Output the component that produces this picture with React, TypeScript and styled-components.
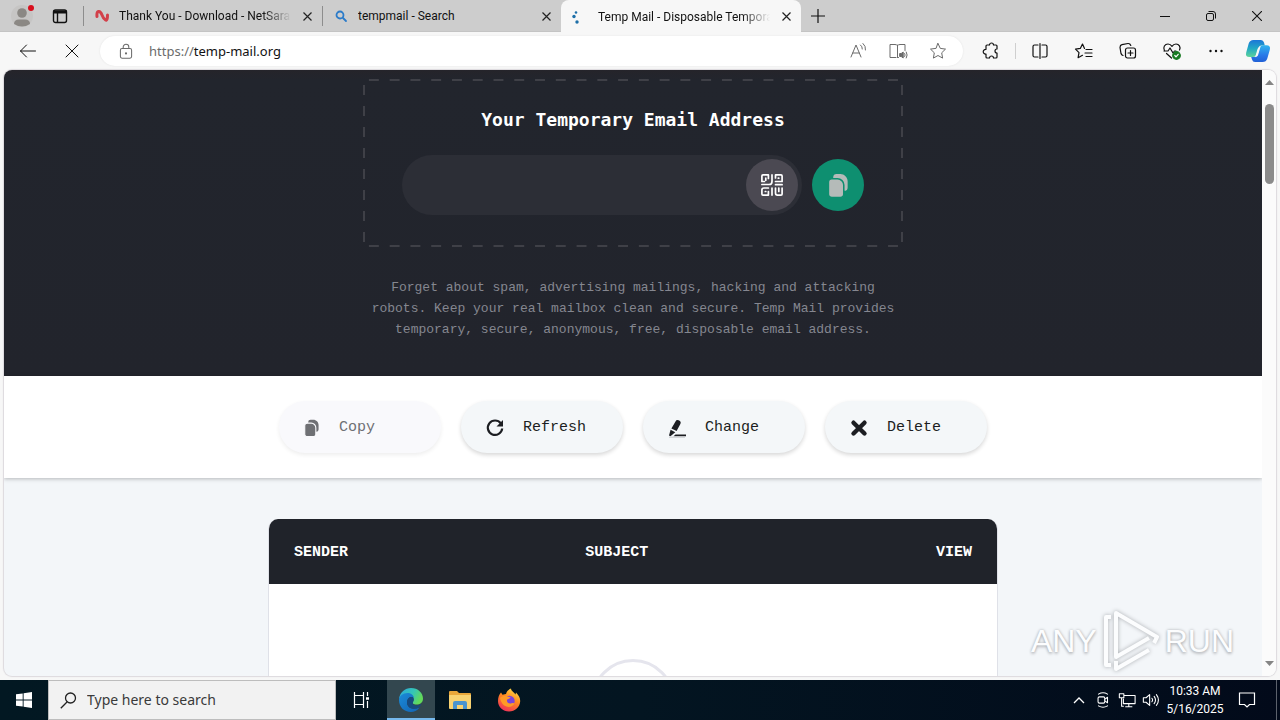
import React from "react";
import styled, { createGlobalStyle } from "styled-components";

const ui = `"Noto Sans", "Open Sans", sans-serif`;
const mono = `"Liberation Mono", "DejaVu Sans Mono", monospace`;

const GlobalStyle = createGlobalStyle`
  *, *::before, *::after { box-sizing: border-box; }
  body { margin: 0; font-family: ${ui}; font-size: 12px; color: #111; overflow: hidden; }
  h1, p { margin: 0; }
  button { border: 0; padding: 0; background: none; font: inherit; color: inherit; cursor: pointer; }
  svg { display: block; flex: none; }
`;

const Desktop = styled.div`
  display: flex;
  flex-direction: column;
  height: 100vh;
  background: #f7f7f7;
`;

/* ---------- browser window ---------- */

const TabStrip = styled.header`
  display: flex;
  align-items: stretch;
  height: 32px;
  background: #cdcdcd;
  border-bottom: 1px solid #c4c4c4;
`;

const StripButton = styled.button<{ $width: number }>`
  display: flex;
  align-items: center;
  justify-content: center;
  width: ${(p) => p.$width}px;
  flex: none;
`;

const StripDivider = styled.span`
  width: 1px;
  height: 20px;
  margin-top: 6px;
  background: #8d8d8d;
  flex: none;
`;

const LeadingTools = styled.div`
  display: flex;
  padding-right: 7px;
`;

const Tab = styled.div<{ $active?: boolean }>`
  display: flex;
  align-items: center;
  gap: 10px;
  flex: 0 1 ${(p) => (p.$active ? 240 : 238)}px;
  min-width: 0;
  padding: 1px 9px 0 ${(p) => (p.$active ? 7 : 11)}px;
  border-radius: 8px 8px 0 0;
  background: ${(p) => (p.$active ? "#f7f7f7" : "transparent")};
  margin-bottom: ${(p) => (p.$active ? -1 : 0)}px;
`;

const TabTitle = styled.span<{ $fade?: boolean }>`
  flex: 1;
  min-width: 0;
  overflow: hidden;
  font-family: Roboto, ${ui};
  white-space: nowrap;
  line-height: 16px;
  mask-image: ${(p) =>
    p.$fade ? "linear-gradient(90deg, #000 calc(100% - 28px), transparent)" : "none"};
`;

const TabClose = styled.button`
  display: flex;
  align-items: center;
  justify-content: center;
  width: 12px;
  height: 20px;
`;

const WindowControls = styled.div`
  display: flex;
  margin-left: auto;
`;

const Toolbar = styled.nav`
  display: flex;
  align-items: center;
  height: 38px;
  padding: 0 2px 0 6px;
  background: #f7f7f7;
  flex: none;
`;

const ToolButton = styled.button<{ $width?: number }>`
  display: flex;
  align-items: center;
  justify-content: center;
  width: ${(p) => p.$width ?? 44}px;
  height: 30px;
  flex: none;
`;

const ToolDivider = styled.span`
  width: 1px;
  height: 16px;
  margin: 0 2px;
  background: #cfcfcf;
`;

const AddressBar = styled.form`
  display: flex;
  align-items: center;
  flex: 1;
  min-width: 0;
  height: 30px;
  margin: 0 6px;
  padding: 0 5px 0 18px;
  border-radius: 15px;
  background: #fff;
  box-shadow: 0 0 2px #e2e2e2;
  color: #6b6b6b;
`;

const AddressText = styled.a`
  flex: 1;
  margin-left: 15px;
  font-size: 13px;
  line-height: 20px;
  color: #6b6b6b;
  text-decoration: none;
  b { font-weight: 400; color: #111; }
`;

const Viewport = styled.div`
  position: relative;
  display: flex;
  flex: 1;
  min-height: 0;
  margin: 0 4px 4px;
  border-radius: 8px;
  overflow: hidden;
  background: #f3f6f9;
  box-shadow: 0 0 1px 1px #dcd9dd;
`;

const Page = styled.main`
  flex: 1;
  min-width: 0;
  overflow: hidden;
`;

const ScrollTrack = styled.div`
  display: flex;
  flex-direction: column;
  align-items: center;
  width: 14px;
  padding: 10px 0;
  background: #fbfbfb;
`;

const ScrollThumb = styled.div`
  width: 9px;
  height: 80px;
  margin: 19px 0 auto;
  border-radius: 5px;
  background: #8b8b8b;
`;

/* ---------- mail page ---------- */

const Hero = styled.section`
  display: flex;
  flex-direction: column;
  align-items: center;
  padding: 9px 16px 36px;
  background: linear-gradient(#25242a, #22252d 10px, #22242c);
`;

const dash = "transparent 30%, #3f4047 30% 78%, transparent 78%";

const AddressBox = styled.div`
  width: 100%;
  max-width: 540px;
  padding: 28px 39px 32px;
  text-align: center;
  background:
    linear-gradient(90deg, ${dash}) 0 0 / 21px 2px round no-repeat,
    linear-gradient(90deg, ${dash}) 0 100% / 21px 2px round no-repeat,
    linear-gradient(180deg, ${dash}) 0 0 / 2px 21px no-repeat round,
    linear-gradient(180deg, ${dash}) 100% 0 / 2px 21px no-repeat round;
`;

const BoxTitle = styled.h1`
  padding-top: 1px;
  margin-bottom: 23px;
  font: 700 18px/24px "DejaVu Sans Mono", monospace;
  color: #fff;
`;

const MailRow = styled.div`
  display: flex;
  align-items: center;
  gap: 10px;
`;

const MailPill = styled.div`
  display: flex;
  align-items: center;
  flex: 1;
  height: 60px;
  padding: 4px;
  border-radius: 30px;
  background: #2c2e36;
`;

const MailInput = styled.input`
  flex: 1;
  min-width: 0;
  height: 52px;
  padding: 0 26px;
  border: 0;
  outline: 0;
  background: transparent;
  color: #fff;
  font: 18px/24px ${mono};
`;

const RoundButton = styled.button<{ $tone: string }>`
  display: flex;
  align-items: center;
  justify-content: center;
  width: 52px;
  height: 52px;
  flex: none;
  border-radius: 50%;
  background: ${(p) => p.$tone};
`;

const Lead = styled.p`
  width: 100%;
  max-width: 540px;
  margin-top: 30px;
  font: 13px/21px ${mono};
  text-align: center;
  color: #858790;
`;

const Actions = styled.section`
  position: relative;
  display: flex;
  justify-content: center;
  gap: 20px;
  padding: 25px 0;
  background: #fff;
  box-shadow: 0 1px 4px rgba(0, 0, 0, 0.26);
`;

const ActionButton = styled.button`
  display: flex;
  align-items: center;
  gap: 18px;
  width: 162px;
  height: 52px;
  padding: 1px 0 0 24px;
  border-radius: 26px;
  background: #f4f7f9;
  box-shadow: 0 2px 4px rgba(0, 0, 0, 0.16);
  font: 15px/20px ${mono};
  color: #1c1e22;
  &:disabled { background: #f9f9fc; color: #6f7074; box-shadow: 0 2px 4px rgba(0, 0, 0, 0.07); }
`;

const Inbox = styled.section`
  width: 100%;
  max-width: 730px;
  margin: 41px auto 0;
  border: solid #dfe1e8;
  border-width: 0 1px 1px;
  border-radius: 10px;
  overflow: hidden;
  background: #fff;
`;

const InboxTable = styled.table`
  width: 100%;
  border-spacing: 0;
  table-layout: fixed;
`;

const HeadCell = styled.th<{ $width: number; $end?: boolean }>`
  width: ${(p) => p.$width}%;
  height: 65px;
  padding: 2px 25px 0;
  background: #20232a;
  color: #fff;
  font: 700 15px/20px ${mono};
  text-align: ${(p) => (p.$end ? "right" : "left")};
`;

const EmptyCell = styled.td`
  height: 300px;
  padding: 75px 0 0;
  vertical-align: top;
`;

const Spinner = styled.div`
  width: 84px;
  height: 84px;
  margin: 0 auto;
  border: 3px solid #e5e5ed;
  border-radius: 50%;
`;

const Watermark = styled.div`
  position: absolute;
  right: 42px;
  bottom: 3px;
  display: flex;
  align-items: center;
  gap: 5px;
  font: 32px/64px "Liberation Sans", sans-serif;
  color: #fcfdfe;
  text-shadow: 0 0 3px #a9acb0, 0 2px 3px #c4c6ca;
  pointer-events: none;
  svg { filter: drop-shadow(0 0 2px #a9acb0); }
`;

/* ---------- taskbar ---------- */

const Taskbar = styled.footer`
  display: flex;
  height: 40px;
  flex: none;
  background: linear-gradient(90deg, #021822, #031521 50%, #020a1a);
  color: #fff;
`;

const TaskButton = styled.button<{ $active?: boolean; $width?: number }>`
  display: flex;
  align-items: center;
  justify-content: center;
  width: ${(p) => p.$width ?? 49}px;
  flex: none;
  background: ${(p) => (p.$active ? "#33474f" : "transparent")};
  border-bottom: 2px solid ${(p) => (p.$active ? "#76b9ed" : "transparent")};
  border-top: 2px solid transparent;
`;

const SearchBox = styled.label`
  display: flex;
  align-items: center;
  gap: 10px;
  width: 288px;
  padding-left: 11px;
  border: 1px solid #bdbdbd;
  background: #f2f2f2;
  color: #222;
`;

const SearchInput = styled.input`
  flex: 1;
  min-width: 0;
  border: 0;
  outline: 0;
  padding: 0;
  background: transparent;
  font: 14px/20px ${ui};
  &::placeholder { color: #3a3a3a; opacity: 1; }
`;

const Tray = styled.div`
  display: flex;
  margin-left: auto;
`;

const Clock = styled.time`
  display: flex;
  flex-direction: column;
  justify-content: center;
  width: 64px;
  font-family: Roboto, ${ui};
  font-size: 12px;
  line-height: 18px;
  text-align: center;
  white-space: nowrap;
`;

const ShowDesktop = styled.button`
  width: 4px;
  margin-left: 9px;
  border-left: 1px solid #5c626c;
`;

/* ---------- icons ---------- */

type IconProps = { size?: number; width?: number; children: React.ReactNode };
const Line = ({ size = 20, width = 1, children }: IconProps) => (
  <svg width={size} height={size} viewBox="0 0 20 20" fill="none" stroke="currentColor"
    strokeWidth={width} strokeLinecap="round" strokeLinejoin="round" aria-hidden="true">
    {children}
  </svg>
);

const CloseGlyph = () => (
  <svg width="9" height="9" viewBox="0 0 9 9" stroke="#222" strokeWidth="1.2" aria-hidden="true">
    <path d="M.5.5l8 8M8.5.5l-8 8" />
  </svg>
);

const CopyGlyph = ({ size, color, gap }: { size: number; color: string; gap: string }) => (
  <svg width={size} height={size} viewBox="0 0 26 26" aria-hidden="true">
    <path d="M11 1h4c4 0 7.500 3.500 7.500 7.500V15a3.500 3.500 0 0 1-3.500 3.500h-8A3.500 3.500 0 0 1 7.500 15V4.500A3.500 3.500 0 0 1 11 1z" fill={color} />
    <path d="M6 6h6c3.500 0 6.500 3 6.500 6.500V22a3.500 3.500 0 0 1-3.500 3.500H6A3.500 3.500 0 0 1 2.500 22V9.500A3.500 3.500 0 0 1 6 6z" fill={color} stroke={gap} strokeWidth="1.600" />
  </svg>
);

const QrGlyph = () => (
  <svg width="24" height="24" viewBox="0 0 24 24" fill="none" stroke="#fff" strokeWidth="1.700" strokeLinecap="round" strokeLinejoin="round" aria-hidden="true">
    <path d="M4.500 8.500H1.900V3q0-1.100 1.100-1.100h5.400V5.500M5.800 5.200v2" />
    <path d="M12 1.900v6.500q0 3.100-3 3.100H1.900" />
    <path d="M15.500 5V1.900H21q1.100 0 1.100 1.100v5.500h-6.600M18.800 5.200h-.5M15.500 11.700h6.600" />
    <path d="M8.400 18.500v3.600H3q-1.100 0-1.100-1.100v-4q0-2 2-2h4.500M5.300 18.500h.5" />
    <path d="M12 15v7.100M15.500 15v5q0 2.100 2 2.100H21q1.100 0 1.100-1.100v-6M18.800 15v3.500" />
  </svg>
);

const ActionIcon = ({ name }: { name: string }) => {
  if (name === "Copy") return <CopyGlyph size={18} color="#6f7074" gap="#f9f9fc" />;
  if (name === "Refresh")
    return (
      <svg width="20" height="20" viewBox="0 0 20 20" fill="none" stroke="#1c1e22" strokeWidth="2.200" aria-hidden="true">
        <path d="M15.800 5.400A7.200 7.200 0 1 0 17.200 10.500" />
        <path d="M18 2v6.500h-6.500z" fill="#1c1e22" stroke="none" />
      </svg>
    );
  if (name === "Change")
    return (
      <svg width="20" height="20" viewBox="0 0 20 20" fill="#1c1e22" aria-hidden="true">
        <path d="M8.500 3.400q1-1.900 3.100-1.100l1 .5q1.800 1 .9 2.900L9.600 13 4.400 10.400z" />
        <path d="M3.600 11.700l4.700 2.500-4.900 4-1.400-.7z" />
        <path d="M8.500 16.500H19v1.700H6.500z" />
        <path d="M2 19.200h16" stroke="#c6c9cd" />
      </svg>
    );
  return (
    <svg width="20" height="20" viewBox="0 0 20 20" stroke="#1c1e22" strokeWidth="4.400" strokeLinecap="round" aria-hidden="true">
      <path d="M4.500 4.700l11 10.800M15.500 4.700l-11 10.800" />
    </svg>
  );
};

const Star = "M10 2.500l2.300 4.900 5.200.7-3.800 3.700.9 5.300-4.600-2.600-4.600 2.600.9-5.300-3.800-3.700 5.200-.7z";

const CopilotGlyph = () => (
  <svg width="26" height="26" viewBox="0 0 26 26" aria-hidden="true">
    <defs>
      <linearGradient id="cpA" x1="0" y1="0" x2="0" y2="1">
        <stop offset="0" stopColor="#1b76d8" /><stop offset=".5" stopColor="#22a9c4" /><stop offset="1" stopColor="#5ed39a" />
      </linearGradient>
      <linearGradient id="cpB" x1="0" y1="0" x2="0" y2="1">
        <stop offset="0" stopColor="#2fb4ee" /><stop offset=".6" stopColor="#2878e8" /><stop offset="1" stopColor="#2160d6" />
      </linearGradient>
    </defs>
    <path d="M8.500 2h7.500q2.300 0 3 2.500l.8 3h-3.300q-2.300 0-3 2.200l-2.200 6.800Q10.500 19 8 19H4.500Q0 19 1.200 14.500l2.500-9Q4.800 2 8.500 2z" fill="url(#cpA)" />
    <path d="M17.500 24H10q-2.300 0-3-2.500L6.200 19H9.500q2.300 0 3-2.200l2.200-7q.8-2.500 3.300-2.500h3.500q4.500 0 3.300 4.500l-2.500 8.700Q21.200 24 17.500 24z" fill="url(#cpB)" />
    <path d="M14.300 10l-1.900 6.500q-.3 1-1 1.300l1.900-6.500q.3-1 1-1.300z" fill="#f7f7f7" stroke="#f7f7f7" strokeWidth="1.600" />
  </svg>
);

const EdgeGlyph = () => (
  <svg width="26" height="26" viewBox="0 0 26 26" aria-hidden="true">
    <defs>
      <linearGradient id="edA" x1="0" y1="0" x2="1" y2=".4">
        <stop offset="0" stopColor="#2aa5e0" /><stop offset=".6" stopColor="#35c6b6" /><stop offset="1" stopColor="#62d95a" />
      </linearGradient>
      <linearGradient id="edB" x1="0" y1="0" x2="1" y2="1">
        <stop offset="0" stopColor="#1b8bd8" /><stop offset="1" stopColor="#1263b4" />
      </linearGradient>
    </defs>
    <path d="M1 12C2 5 7 1 13 1c7 0 12 5 12 10.500 0 4-3 6-6.500 6-3 0-4.500-1-3.500-2.500 2-3 0-6.500-4-6.500C6 8.500 2 10 1 12z" fill="url(#edA)" />
    <path d="M1 13c0-4 4-7 8.500-7 4 0 6.500 2.500 6.500 5.500-2-3-7-1-7 4 0 5 5 8 12.500 5C19 24 16 25 13 25 6 25 1 20 1 13z" fill="url(#edB)" />
    <path d="M9 15c0-3 2-5 4.500-5 2 0 3 2 1.500 5-1 2 .5 3.500 3.500 3.500 2 0 4-.7 5-1.500-1 2.200-3 4-5 4.500C13 23 9 19.500 9 15z" fill="#164a80" />
  </svg>
);

const FolderGlyph = () => (
  <svg width="24" height="22" viewBox="0 0 24 22" aria-hidden="true">
    <path d="M1 3q0-1 1-1h7l2 2h11q1 0 1 1v14H1z" fill="#e9a73a" />
    <path d="M1 6h22v13q0 1-1 1H2q-1 0-1-1z" fill="#f8d271" />
    <path d="M5 20v-6q0-2 2-2h10q2 0 2 2v6h-4v-4H9v4z" fill="#4a94cf" />
  </svg>
);

const FirefoxGlyph = () => (
  <svg width="24" height="24" viewBox="0 0 24 24" aria-hidden="true">
    <defs>
      <linearGradient id="ffA" x1=".8" y1="0" x2=".3" y2="1">
        <stop offset="0" stopColor="#ffe14a" /><stop offset=".45" stopColor="#ff8a1e" /><stop offset="1" stopColor="#f0305a" />
      </linearGradient>
    </defs>
    <path d="M4 4.500l1.500 2.200L9 6C9.500 3.500 11.500 1.500 14 .5c0 2.500 3 3.500 4.500 6l.5-2c3 3 4.200 5.500 4.200 8.500C23 19 18 23.500 12 23.500S1 19 1 13c0-3.500 1-6.500 3-8.500z" fill="url(#ffA)" />
    <circle cx="12.500" cy="13" r="5.200" fill="#7a44d8" />
    <path d="M3 10c2-2 5-2.500 7.500-1.500l3 .8c-.5 1.500-2.500 1.700-3.500 2.500-.5 3 2 4.200 4.500 3.500 1.500-.5 2.500-.3 3 .2-1.500 3-5 4-8 3S4 15 3 10z" fill="#ff9a26" />
  </svg>
);

const actions = ["Copy", "Refresh", "Change", "Delete"];

export default function App() {
  return (
    <Desktop>
      <GlobalStyle />
      <TabStrip>
        <LeadingTools>
          <StripButton $width={44} aria-label="Profile">
            <svg width="24" height="24" viewBox="0 0 24 24" aria-hidden="true">
              <circle cx="12" cy="12" r="11" fill="#c6c5c4" />
              <circle cx="12" cy="9" r="4.800" fill="#8b8884" />
              <path d="M4 20q0-4.500 5-4.500h6q5 0 5 4.500-8 5-16 0z" fill="#8b8884" />
              <circle cx="21" cy="4" r="3" fill="#d80f1d" />
            </svg>
          </StripButton>
          <StripButton $width={32} aria-label="Tab actions">
            <svg width="16" height="16" viewBox="0 0 16 16" fill="none" stroke="#111" strokeWidth="1.400" aria-hidden="true">
              <rect x="1.500" y="2" width="13" height="12.500" rx="2" />
              <path d="M1.500 4h13" strokeWidth="3" /><path d="M5.500 4v10" />
            </svg>
          </StripButton>
        </LeadingTools>
        <StripDivider />
        <Tab>
          <svg width="14" height="14" viewBox="0 0 14 14" fill="none" aria-hidden="true">
            <path d="M2 7.500Q1.500 3 3.500 2.500T7 6t3.500 5 2-5" stroke="#d2404a" strokeWidth="3" strokeLinecap="round" />
          </svg>
          <TabTitle $fade>Thank You - Download - NetSara</TabTitle>
          <TabClose aria-label="Close tab"><CloseGlyph /></TabClose>
        </Tab>
        <StripDivider />
        <Tab>
          <svg width="14" height="14" viewBox="0 0 14 14" fill="none" stroke="#2b7bc9" strokeWidth="1.800" strokeLinecap="round" aria-hidden="true">
            <circle cx="6" cy="6" r="3.500" /><path d="M9 9l3 3" />
          </svg>
          <TabTitle>tempmail - Search</TabTitle>
          <TabClose aria-label="Close tab"><CloseGlyph /></TabClose>
        </Tab>
        <Tab $active>
          <svg width="20" height="16" viewBox="0 0 20 16" fill="#1d6fa8" aria-hidden="true">
            <circle cx="8" cy="3.500" r="1.300" /><circle cx="6" cy="7.500" r="1.700" /><circle cx="9" cy="13" r="1.700" />
          </svg>
          <TabTitle $fade>Temp Mail - Disposable Tempora</TabTitle>
          <TabClose aria-label="Close tab"><CloseGlyph /></TabClose>
        </Tab>
        <StripButton $width={34} aria-label="New tab">
          <svg width="14" height="14" viewBox="0 0 14 14" stroke="#111" strokeWidth="1.200" aria-hidden="true"><path d="M7 0v14M0 7h14" /></svg>
        </StripButton>
        <WindowControls>
          <StripButton $width={46} aria-label="Minimize">
            <svg width="10" height="10" viewBox="0 0 10 10" stroke="#111" aria-hidden="true"><path d="M0 5.500h10" /></svg>
          </StripButton>
          <StripButton $width={46} aria-label="Restore">
            <svg width="10" height="10" viewBox="0 0 10 10" fill="none" stroke="#111" aria-hidden="true">
              <rect x=".5" y="2.500" width="7" height="7" rx="1.500" /><path d="M2.500 .5H7q2.500 0 2.500 2.500v4.500" />
            </svg>
          </StripButton>
          <StripButton $width={46} aria-label="Close window">
            <svg width="10" height="10" viewBox="0 0 10 10" stroke="#111" strokeWidth="1.100" aria-hidden="true"><path d="M0 0l10 10M10 0L0 10" /></svg>
          </StripButton>
        </WindowControls>
      </TabStrip>

      <Toolbar>
        <ToolButton aria-label="Back"><Line><path d="M17.500 10H2.500M8.500 4l-6 6 6 6" /></Line></ToolButton>
        <ToolButton aria-label="Stop"><Line><path d="M4 4l12 12M16 4L4 16" /></Line></ToolButton>
        <AddressBar onSubmit={(e) => e.preventDefault()}>
          <Line size={16} width={1.3}>
            <rect x="3" y="7" width="14" height="12" rx="2" /><path d="M6.500 7V5a3.500 3.500 0 0 1 7 0v2" /><circle cx="10" cy="13" r=".7" />
          </Line>
          <AddressText href="#top">https://<b>temp-mail.org</b></AddressText>
          <ToolButton $width={40} type="button" aria-label="Read aloud">
            <Line><path d="M3 16L8 4l5 12M4.800 12h6.400M12.500 4q2 1.500 1.800 4M15 2.500q3 2.500 2.500 6.500" /></Line>
          </ToolButton>
          <ToolButton $width={40} type="button" aria-label="Immersive reader">
            <Line>
              <path d="M9.500 4v12.500M9.500 4.500Q9 3.500 7 3.500H2v13h6M9.500 4.500q.5-1 2.500-1h5v6M9.500 16.500h1" />
              <path d="M12 12.500h1.200l2-1.500v6l-2-1.500H12z" fill="currentColor" /><path d="M16.700 12.500q1 1.500 0 3M18.300 11q1.800 3 0 6" />
            </Line>
          </ToolButton>
          <ToolButton $width={40} type="button" aria-label="Add to favorites"><Line><path d={Star} /></Line></ToolButton>
        </AddressBar>
        <ToolButton aria-label="Extensions">
          <Line width={1.2}>
            <path d="M6 4h2.500a2 2 0 0 1 4 0H15q1 0 1 1v3a2 2 0 0 0 0 4v4q0 1-1 1h-2.500a2 2 0 0 0-4 0H6q-1 0-1-1v-3a2.300 2.300 0 1 1 0-4.500V5q0-1 1-1z" />
          </Line>
        </ToolButton>
        <ToolDivider />
        <ToolButton aria-label="Split screen">
          <Line width={1.2}><path d="M8 4H4.500Q3 4 3 5.500v9Q3 16 4.500 16H8M12 4h3.500Q17 4 17 5.500v9q0 1.500-1.500 1.500H12M10 2.500v15" /></Line>
        </ToolButton>
        <ToolButton aria-label="Favorites">
          <Line width={1.2}><path d="M10.500 7.500L8.500 3 6.300 7.400l-4.800.7L5 11.700l-.9 5 4.400-2.400M12 8.500h6M11 12h7M12 15.500h6" /></Line>
        </ToolButton>
        <ToolButton aria-label="Collections">
          <Line width={1.2}>
            <rect x="7.500" y="7" width="10" height="10" rx="2" /><path d="M12.500 9.500v5M10 12h5M5 14.500q-1.500-.5-2-2L2 6.500Q2 4 4 3.600l6-1.100q2-.2 2.800 2" />
          </Line>
        </ToolButton>
        <ToolButton aria-label="Browser essentials">
          <Line width={1.2}>
            <path d="M2.500 10C.5 6 3 3 6 3q2.500 0 4 2.300Q11.500 3 14 3c3 0 5 3 3.500 6M2 10h4l2-3 3 5 1.500-2H14M4.500 12.500L9.500 17" />
            <circle cx="14.500" cy="14.500" r="3.800" fill="#187a22" stroke="#187a22" /><path d="M12.800 14.500l1.200 1.300 2.200-2.500" stroke="#fff" />
          </Line>
        </ToolButton>
        <ToolButton aria-label="Settings and more">
          <Line><g fill="currentColor" stroke="none"><circle cx="4.500" cy="10" r="1.200" /><circle cx="10" cy="10" r="1.200" /><circle cx="15.500" cy="10" r="1.200" /></g></Line>
        </ToolButton>
        <ToolButton $width={40} aria-label="Copilot"><CopilotGlyph /></ToolButton>
      </Toolbar>

      <Viewport>
        <Page id="top">
          <Hero>
            <AddressBox>
              <BoxTitle>Your Temporary Email Address</BoxTitle>
              <MailRow>
                <MailPill>
                  <MailInput readOnly value="" aria-label="Temporary email address" />
                  <RoundButton $tone="#4b4952" aria-label="Show QR code"><QrGlyph /></RoundButton>
                </MailPill>
                <RoundButton $tone="#0e8f70" aria-label="Copy address">
                  <CopyGlyph size={25} color="#b5bbb9" gap="#0e8f70" />
                </RoundButton>
              </MailRow>
            </AddressBox>
            <Lead>
              Forget about spam, advertising mailings, hacking and attacking robots. Keep your real mailbox
              clean and secure. Temp Mail provides temporary, secure, anonymous, free, disposable email address.
            </Lead>
          </Hero>
          <Actions>
            {actions.map((name) => (
              <ActionButton key={name} disabled={name === "Copy"}>
                <ActionIcon name={name} />
                {name}
              </ActionButton>
            ))}
          </Actions>
          <Inbox>
            <InboxTable>
              <thead>
                <tr>
                  <HeadCell $width={40}>SENDER</HeadCell>
                  <HeadCell $width={40}>SUBJECT</HeadCell>
                  <HeadCell $width={20} $end>VIEW</HeadCell>
                </tr>
              </thead>
              <tbody>
                <tr><EmptyCell colSpan={3}><Spinner /></EmptyCell></tr>
              </tbody>
            </InboxTable>
          </Inbox>
        </Page>
        <ScrollTrack>
          <svg width="9" height="5" viewBox="0 0 9 5" fill="#858585" aria-hidden="true"><path d="M4.500 0L9 5H0z" /></svg>
          <ScrollThumb />
          <svg width="9" height="5" viewBox="0 0 9 5" fill="#858585" aria-hidden="true"><path d="M4.500 5L9 0H0z" /></svg>
        </ScrollTrack>
        <Watermark>
          <span>ANY</span>
          <svg width="58" height="64" viewBox="0 0 58 64" fill="none" stroke="#fcfdfe" strokeWidth="4" strokeLinejoin="round" aria-hidden="true">
            <path d="M9 8H4v48h5M14 14v34l33-19" /><path d="M14 14V4l41 24-3 6M14 52v8l33-19" />
          </svg>
          <span>RUN</span>
        </Watermark>
      </Viewport>

      <Taskbar>
        <TaskButton $width={48} aria-label="Start">
          <svg width="16" height="16" viewBox="0 0 16 16" fill="#fff" aria-hidden="true">
            <path d="M0 2.300L6.700 1.400v6.200H0zM7.600 1.200L16 0v7.600H7.600zM0 8.400h6.700v6.200L0 13.700zM7.600 8.400H16V16l-8.400-1.200z" />
          </svg>
        </TaskButton>
        <SearchBox>
          <svg width="17" height="17" viewBox="0 0 17 17" fill="none" stroke="#222" strokeWidth="1.300" aria-hidden="true">
            <circle cx="10.500" cy="6" r="5" /><path d="M7 10L.8 16.200" />
          </svg>
          <SearchInput placeholder="Type here to search" aria-label="Search" />
        </SearchBox>
        <TaskButton $width={51} aria-label="Task view">
          <svg width="18" height="18" viewBox="0 0 18 18" fill="none" stroke="#fff" strokeWidth="1.200" aria-hidden="true">
            <path d="M1.500 1v3.500h9V1M1.500 17v-3.500h9V17M1.500 4.500v9M10.500 4.500v9M14.500 1v4M14.500 10v7" /><path d="M13 7.500h3" strokeWidth="2.500" />
          </svg>
        </TaskButton>
        <TaskButton $active $width={48} aria-label="Edge"><EdgeGlyph /></TaskButton>
        <TaskButton aria-label="File Explorer"><FolderGlyph /></TaskButton>
        <TaskButton aria-label="Firefox"><FirefoxGlyph /></TaskButton>
        <Tray>
          <TaskButton $width={24} aria-label="Show hidden icons">
            <svg width="12" height="8" viewBox="0 0 12 8" fill="none" stroke="#fff" strokeWidth="1.300" aria-hidden="true"><path d="M1 7l5-5 5 5" /></svg>
          </TaskButton>
          <TaskButton $width={24} aria-label="Meet now">
            <Line size={18} width={1.2}><rect x="4.500" y="6.500" width="7.500" height="7" rx="1.500" /><path d="M12 9l3-2v6l-3-2M5 3.500q5-3 10 0M5 16.500q5 3 10 0" /></Line>
          </TaskButton>
          <TaskButton $width={24} aria-label="Network">
            <Line size={18} width={1.2}><path d="M7 5h12v9H6V9M12 14v3M8.500 17.500h7M1.500 3h5v4.500h-5zM4 7.500V17H6" /></Line>
          </TaskButton>
          <TaskButton $width={24} aria-label="Volume">
            <Line size={18} width={1.2}><path d="M1.500 7.500h3L8.500 4v12l-4-3.500h-3zM11 8q1.500 2 0 4M13.500 6q3 4 0 8M16 4q4.500 6 0 12" /></Line>
          </TaskButton>
          <Clock dateTime="2025-05-16T10:33"><span>10:33 AM</span><span>5/16/2025</span></Clock>
          <TaskButton $width={40} aria-label="Notifications">
            <svg width="18" height="16" viewBox="0 0 18 16" fill="none" stroke="#fff" strokeWidth="1.200" aria-hidden="true">
              <path d="M1.500 1h15v11.500h-5L9 15l-2.500-2.500h-5z" />
            </svg>
          </TaskButton>
          <ShowDesktop aria-label="Show desktop" />
        </Tray>
      </Taskbar>
    </Desktop>
  );
}
